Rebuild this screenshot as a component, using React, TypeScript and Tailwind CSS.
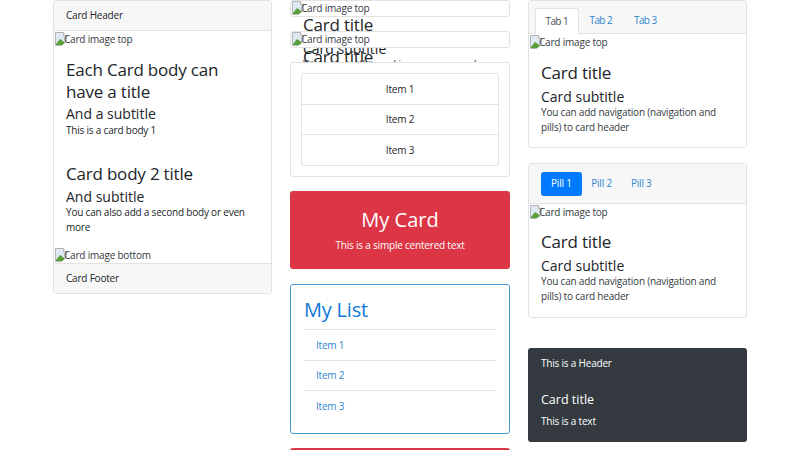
const F = "font-['Open_Sans','Noto_Sans',sans-serif]";
const S = "text-[10px] tracking-[-0.2px]";

function Img({ label = "Card image top" }: { label?: string }) {
  return (
    <div className={`h-[16px] flex ${S} leading-[15px] text-[#343a40] shrink-0`}>
      <svg width="16" height="16" viewBox="0 0 16 16" className="shrink-0">
        <path d="M1.5 1.5h8l3 3v5l-5 5h-6z" fill="#dfe8f5" stroke="#b4b4b4" />
        <path d="M2 13l4-5 3 2 2 2-3 2H2z" fill="#5aa03c" />
        <path d="M9.5 1.5v3h3" fill="#fff" stroke="#b4b4b4" />
      </svg>
      <span className="-ml-[6px] pt-[1px]">{label}</span>
    </div>
  );
}

const cardCls = "border border-[#e2e2e2] rounded-[3px] bg-white shrink-0";
const head = "bg-[#f7f7f7] border-b border-[#e2e2e2]";
const T = "text-[17px] leading-[22px] tracking-[-0.2px]";
const ST = "text-[14px] leading-[20px]";

function Overlay({ subtitle, top }: { subtitle: boolean; top: string }) {
  return (
    <div className={`${cardCls} h-[17px] relative`}>
      <div className="h-[15px] overflow-hidden"><div className="-mt-[1px]"><Img /></div></div>
      <div className={`absolute left-[12px] w-[195px] text-[#212529] ${top}`}>
        <div className={T}>Card title</div>
        {subtitle && <div className={`${ST} mt-[3px]`}>Card subtitle</div>}
        {subtitle && <div className={`${S} leading-[15px] -mt-[2px] whitespace-nowrap`}>You can use the card image as an overlay</div>}
      </div>
    </div>
  );
}

function Body() {
  return (
    <>
      <div className={T}>Card title</div>
      <div className={`${ST} mt-[3px]`}>Card subtitle</div>
      <div className={`${S} leading-[15px] -mt-[2px] text-[#343a40]`}>You can add navigation (navigation and pills) to card header</div>
    </>
  );
}

export default function App() {
  return (
    <div className={`${F} w-[800px] h-[450px] overflow-hidden bg-white flex gap-[18px] pl-[53px] text-[#212529]`}>
      <div className="w-[219px] shrink-0">
        <div className={`${cardCls} h-[294px] flex flex-col`}>
          <div className={`${head} h-[30px] shrink-0 flex items-center px-[12px] ${S}`}>Card Header</div>
          <Img />
          <div className="px-[12px] pt-[12px] h-[101px] shrink-0">
            <div className={T}>Each Card body can have a title</div>
            <div className={`${ST} mt-[1px]`}>And a subtitle</div>
            <div className={`${S} leading-[13px]`}>This is a card body 1</div>
          </div>
          <div className="px-[12px] pt-[15px] h-[99px] shrink-0">
            <div className={T}>Card body 2 title</div>
            <div className={`${ST} mt-[2px]`}>And subtitle</div>
            <div className={`${S} leading-[15px] -mt-[2px]`}>You can also add a second body or even more</div>
          </div>
          <Img label="Card image bottom" />
          <div className={`bg-[#f7f7f7] border-t border-[#e2e2e2] grow flex items-center px-[12px] ${S}`}>Card Footer</div>
        </div>
      </div>

      <div className="w-[220px] shrink-0 flex flex-col">
        <div className="relative z-0"><Overlay subtitle top="top-[13px]" /></div>
        <div className="relative z-10 mt-[14px]"><Overlay subtitle={false} top="top-[14px]" /></div>
        <div className={`${cardCls} relative z-20 mt-[14px] h-[115px] p-[10px]`}>
          <div className={`border border-[#e2e2e2] rounded-[3px] ${S} text-center`}>
            <div className="h-[31px] flex items-center justify-center border-b border-[#e2e2e2]">Item 1</div>
            <div className="h-[30px] flex items-center justify-center border-b border-[#e2e2e2]">Item 2</div>
            <div className="h-[30px] flex items-center justify-center">Item 3</div>
          </div>
        </div>
        <div className="mt-[14px] h-[78px] shrink-0 rounded-[3px] bg-[#dc3545] text-white text-center pt-[15px]">
          <div className="text-[20px] leading-[28px]">My Card</div>
          <div className={`${S} leading-[16px] mt-[3px]`}>This is a simple centered text</div>
        </div>
        <div className="mt-[15px] h-[150px] shrink-0 rounded-[3px] border border-[#4a9bd4] px-[13px] pt-[10px]">
          <div className="text-[20px] leading-[30px] tracking-[-0.2px] text-[#0f78d8] pb-[4px]">My List</div>
          <div className={`${S} text-[#2f86cc]`}>
            <div className="h-[31px] flex items-center px-[12px] border-t border-[#e5e5e5]">Item 1</div>
            <div className="h-[30px] flex items-center px-[12px] border-t border-[#e5e5e5]">Item 2</div>
            <div className="h-[31px] flex items-center px-[12px] border-t border-[#e5e5e5]">Item 3</div>
          </div>
        </div>
        <div className="mt-[14px] h-[20px] shrink-0 rounded-t-[3px] bg-[#dc3545]" />
      </div>

      <div className="w-[219px] shrink-0 flex flex-col">
        <div className={`${cardCls} h-[148px]`}>
          <div className={`${head} h-[33px] flex items-end pl-[6px] text-[10px] tracking-[-0.6px] text-[#2f86cc]`}>
            <div className="h-[26px] px-[9.5px] flex items-center bg-white border border-b-0 border-[#e2e2e2] rounded-t-[3px] text-[#495057] relative top-px">Tab 1</div>
            <div className="h-[26px] px-[11px] flex items-center">Tab 2</div>
            <div className="h-[26px] px-[11px] flex items-center">Tab 3</div>
          </div>
          <Img />
          <div className="px-[12px] pt-[12px]"><Body /></div>
        </div>
        <div className={`${cardCls} h-[155px] mt-[15px]`}>
          <div className={`${head} h-[40px] flex items-center pl-[12px] ${S} text-[#2f86cc]`}>
            <div className="h-[24px] px-[10px] flex items-center bg-[#007bff] text-white rounded-[3px]">Pill 1</div>
            <div className="h-[24px] px-[9.5px] flex items-center">Pill 2</div>
            <div className="h-[24px] px-[9.5px] flex items-center">Pill 3</div>
          </div>
          <Img />
          <div className="px-[12px] pt-[11px]"><Body /></div>
        </div>
        <div className="mt-[30px] h-[94px] shrink-0 rounded-[3px] bg-[#343a40] text-white">
          <div className={`h-[31px] flex items-center px-[13px] ${S} border-b border-[#2f353a]`}>This is a Header</div>
          <div className="px-[13px] pt-[12px]">
            <div className="text-[12.5px] leading-[18px]">Card title</div>
            <div className={`${S} leading-[16px] mt-[4px]`}>This is a text</div>
          </div>
        </div>
      </div>
    </div>
  );
}
